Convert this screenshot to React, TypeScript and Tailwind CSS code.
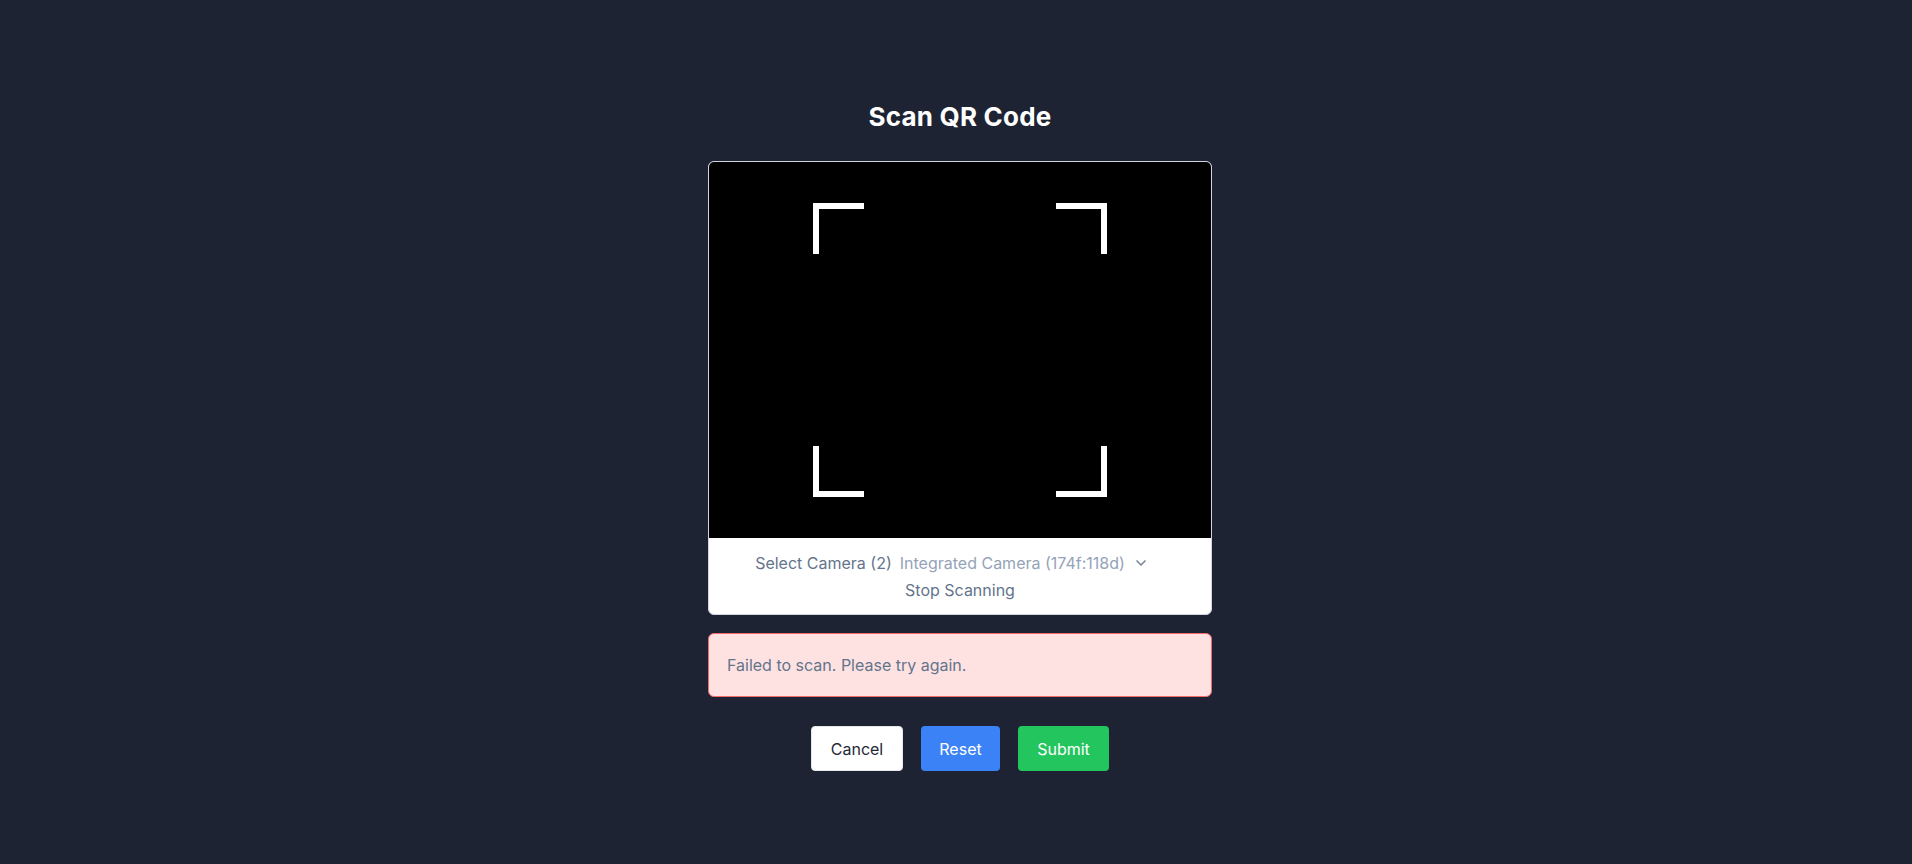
import { ChevronDown } from 'lucide-react';

function Corner({ pos }: { pos: 'tl' | 'tr' | 'bl' | 'br' }) {
  const place = {
    tl: 'top-0 left-0 border-t-[6px] border-l-[6px]',
    tr: 'top-0 right-0 border-t-[6px] border-r-[6px]',
    bl: 'bottom-0 left-0 border-b-[6px] border-l-[6px]',
    br: 'bottom-0 right-0 border-b-[6px] border-r-[6px]',
  };
  return <div className={`absolute w-[51px] h-[51px] border-white ${place[pos]}`} />;
}

export default function App() {
  return (
    <div
      className="min-h-screen w-full bg-[#1e2333] flex flex-col items-center pt-[101px] pl-[8px]"
      style={{ fontFamily: 'Inter, "Noto Sans", sans-serif' }}
    >
      <h1 className="text-[26px] leading-8 font-bold text-white mb-[28px] tracking-[0.2px]">Scan QR Code</h1>

      {/* Scanner panel */}
      <div className="w-[504px] bg-white border border-gray-300 rounded-md overflow-hidden">
        <div className="relative h-[376px] bg-black flex items-center justify-center">
          <div className="relative w-[294px] h-[294px]">
            <Corner pos="tl" />
            <Corner pos="tr" />
            <Corner pos="bl" />
            <Corner pos="br" />
          </div>
        </div>
        <div className="flex flex-col items-center pt-[13px] pb-[12px] gap-[3px] text-base leading-6">
          <div className="flex items-center">
            <span className="text-[#64748b]">Select Camera (2)</span>
            <span className="ml-2 flex items-center text-[#94a3b8] pr-[16px]">
              Integrated Camera (174f:118d)
              <ChevronDown size={16} strokeWidth={2.5} className="ml-2 text-[#7b8799]" />
            </span>
          </div>
          <button className="text-[#64748b]">Stop Scanning</button>
        </div>
      </div>

      {/* Error */}
      <div className="w-[504px] mt-[18px] h-16 flex items-center px-[18px] bg-[#fee2e2] border border-[#f26b6b] rounded-md text-base text-[#64748b]">
        Failed to scan. Please try again.
      </div>

      {/* Actions */}
      <div className="flex items-center gap-[18px] mt-[29px]">
        <button className="h-[45px] w-[92px] bg-white text-[#1f2937] rounded border border-gray-200 text-base">
          Cancel
        </button>
        <button className="h-[45px] w-[79px] bg-[#3b82f6] text-white rounded text-base">Reset</button>
        <button className="h-[45px] w-[91px] bg-[#22c55e] text-white rounded text-base">Submit</button>
      </div>
    </div>
  );
}
